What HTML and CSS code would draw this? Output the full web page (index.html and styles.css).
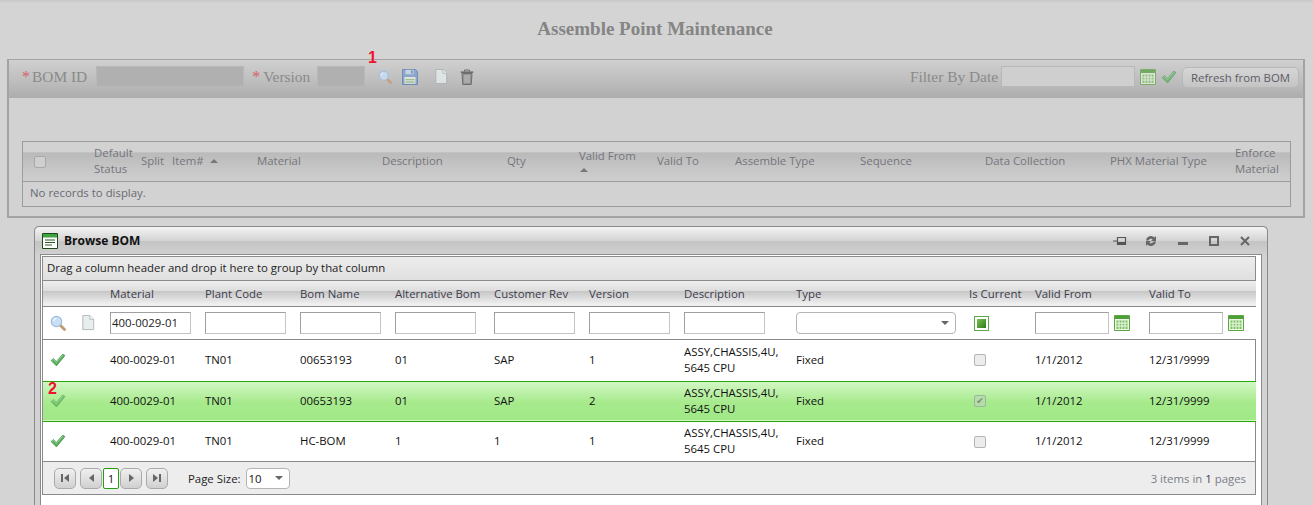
FILE: index.html
```html
<!DOCTYPE html>
<html>
<head>
	<meta charset="utf-8">
	<title>Assemble Point Maintenance</title>
	<link rel="stylesheet" href="styles.css">
</head>
<body>
	<svg class="sprites" width="0" height="0">
		<symbol id="i-search" viewBox="0 0 16 16">
			<path d="M10 10l4.500 4.500" stroke="#c39a6c" stroke-width="2.800" stroke-linecap="round"/>
			<circle cx="6.500" cy="6.500" r="5.200" fill="#c8dff6" stroke="#9dbde0" stroke-width="1.200"/>
			<path d="M3.600 6a3.200 3.200 0 0 1 2.600-2.600" fill="none" stroke="#f4f9ff" stroke-width="1.300"/>
		</symbol>
		<symbol id="i-save" viewBox="0 0 16 16">
			<path d="M.5.5h13l2 2v13H.5z" fill="#7f9fd0" stroke="#5f80b4"/>
			<path d="M3.500 .8h8v4.400h-8z" fill="#c9d6ea"/>
			<path d="M9 1.500h1.600v3H9z" fill="#6784b0"/>
			<path d="M2.500 8h11v6.800h-11z" fill="#e4eee0"/>
			<path d="M3.500 10h9v1.200h-9zM3.500 12.200h9v1.600h-9z" fill="#9cc08a"/>
		</symbol>
		<symbol id="i-doc" viewBox="0 0 14 17">
			<path d="M1.500.5h7.500l4 4v11h-11.500z" fill="#e6ecec" stroke="#a8b2b4"/>
			<path d="M9 .5v4h4" fill="#fbfdfd" stroke="#a8b2b4"/>
		</symbol>
		<symbol id="i-trash" viewBox="0 0 14 16">
			<path d="M.8 3.200h12.400" stroke="#555" stroke-width="1.600"/>
			<path d="M4.500 2.500v-1.500h5v1.500" fill="none" stroke="#555"/>
			<path d="M2 4.500h10l-.8 11h-8.400z" fill="#8a8a8a" stroke="#5c5c5c"/>
			<path d="M5 6v8M7 6v8M9 6v8" stroke="#c4c4c4"/>
		</symbol>
		<symbol id="i-cal" viewBox="0 0 16 16">
			<path d="M.5.5h15v15H.500z" fill="#eaf6e0" stroke="#5ea644"/>
			<path d="M1 1h14v3H1z" fill="#4f9e3a"/>
			<path d="M2.500 5.500h11v8.500h-11z" fill="#7dc06a"/>
			<path d="M5 5.500v8.500M8 5.500v8.500M11 5.500v8.500M2.500 8.200h11M2.500 11h11" stroke="#f2fbe8"/>
		</symbol>
		<symbol id="i-check" viewBox="0 0 16 14">
			<path d="M1 7.500l2.500-2 2.800 3L12.800 1 15 2.600 6.500 13z" fill="#58ad58" stroke="#3f8f48" stroke-width=".6"/>
			<path d="M2 7.500l1.500-1 2.800 3L13 2" fill="none" stroke="#a4dca4" stroke-width=".8"/>
		</symbol>
		<symbol id="i-win" viewBox="0 0 16 16">
			<path d="M.5.500h15v15H.500z" fill="#fff" stroke="#1c4a1c"/>
			<path d="M1 1h14v3.500H1z" fill="#3fa33f"/>
			<path d="M3 7h10M3 9.500h10M3 12h7" stroke="#2b5a2b" stroke-width="1.100"/>
		</symbol>
	</svg>

	<h1 class="page-title">Assemble Point Maintenance</h1>

	<div class="panel">
		<span class="marker marker-one">1</span>
		<div class="toolbar">
			<span class="req">*</span><label class="tool-label">BOM ID</label>
			<input class="tool-input bom-id">
			<span class="req req-gap">*</span><label class="tool-label">Version</label>
			<input class="tool-input version">
			<svg class="icon tool-icon tool-search"><use href="#i-search"/></svg>
			<svg class="icon tool-icon tool-save"><use href="#i-save"/></svg>
			<svg class="icon tool-icon tool-doc"><use href="#i-doc"/></svg>
			<svg class="icon tool-icon tool-trash"><use href="#i-trash"/></svg>
			<div class="toolbar-right">
				<label class="tool-label">Filter By Date</label>
				<input class="tool-input date-filter">
				<svg class="icon dim"><use href="#i-cal"/></svg>
				<svg class="icon dim"><use href="#i-check"/></svg>
				<button class="refresh-btn">Refresh from BOM</button>
			</div>
		</div>
		<table class="grid grid-points">
			<colgroup>
				<col class="c64"><col class="c47"><col class="c31"><col class="c85"><col class="c125"><col class="c125"><col class="c72"><col class="c78"><col class="c78"><col class="c125"><col class="c125"><col class="c125"><col class="c125"><col>
			</colgroup>
			<thead>
				<tr>
					<th class="check-col"><span class="box"></span></th>
					<th>Default Status</th>
					<th>Split</th>
					<th>Item# <span class="sort-up item-sort"></span></th>
					<th>Material</th>
					<th>Description</th>
					<th>Qty</th>
					<th class="sorted-col">Valid From<br><span class="sort-up"></span></th>
					<th>Valid To</th>
					<th>Assemble Type</th>
					<th>Sequence</th>
					<th>Data Collection</th>
					<th>PHX Material Type</th>
					<th>Enforce Material</th>
				</tr>
			</thead>
			<tbody>
				<tr><td colspan="14" class="no-records">No records to display.</td></tr>
			</tbody>
		</table>
	</div>

	<div class="window">
		<div class="window-title">
			<svg class="icon win-icon"><use href="#i-win"/></svg>
			<span class="window-name">Browse BOM</span>
			<div class="window-actions">
				<svg class="pin" width="14" height="10" viewBox="0 0 14 10"><path d="M0 5h4M4.500 1.500h8v7h-8zM4.500 1.500v7" fill="none" stroke="#555" stroke-width="1.200"/><path d="M5 6h7v2H5z" fill="#555"/></svg>
				<svg width="12" height="12" viewBox="0 0 12 12"><path d="M1 5.500a5 5 0 0 1 8.500-3l1.500-1.500v5H6l1.700-1.700A2.600 2.600 0 0 0 3.500 5.500zM11 6.500a5 5 0 0 1-8.500 3L1 11V6h5L4.300 7.700A2.600 2.600 0 0 0 8.500 6.500z" fill="#666"/></svg>
				<svg width="10" height="10" viewBox="0 0 10 10"><path d="M0 6h10v3H0z" fill="#666"/></svg>
				<svg width="10" height="10" viewBox="0 0 10 10"><path d="M1 1h8v8H1z" fill="none" stroke="#666" stroke-width="2"/></svg>
				<svg width="10" height="10" viewBox="0 0 10 10"><path d="M1 1l8 8M9 1l-8 8" stroke="#666" stroke-width="2"/></svg>
			</div>
		</div>
		<div class="window-body">
			<span class="marker marker-two">2</span>
			<div class="bom-box">
				<div class="group-hint">Drag a column header and drop it here to group by that column</div>
				<table class="grid grid-bom">
					<colgroup>
						<col class="c60"><col class="c95"><col class="c95"><col class="c95"><col class="c99"><col class="c95"><col class="c95"><col class="c112"><col class="c173"><col class="c66"><col class="c114"><col>
					</colgroup>
					<thead>
						<tr>
							<th></th><th>Material</th><th>Plant Code</th><th>Bom Name</th><th>Alternative Bom</th><th>Customer Rev</th><th>Version</th><th>Description</th><th>Type</th><th>Is Current</th><th>Valid From</th><th>Valid To</th>
						</tr>
						<tr class="filter-row">
							<td class="icon-cell">
								<svg class="icon"><use href="#i-search"/></svg>
								<svg class="icon filter-doc"><use href="#i-doc"/></svg>
							</td>
							<td><input class="filter-input" value="400-0029-01"></td>
							<td><input class="filter-input"></td>
							<td><input class="filter-input"></td>
							<td><input class="filter-input"></td>
							<td><input class="filter-input"></td>
							<td><input class="filter-input"></td>
							<td><input class="filter-input"></td>
							<td><div class="fake-select type-select"><span></span><i class="caret"></i></div></td>
							<td class="green-cell"><span class="green-box"></span></td>
							<td><div class="date-cell"><input class="filter-input date-input"><svg class="icon"><use href="#i-cal"/></svg></div></td>
							<td><div class="date-cell"><input class="filter-input date-input"><svg class="icon"><use href="#i-cal"/></svg></div></td>
						</tr>
					</thead>
					<tbody>
						<tr>
							<td class="tick-cell"><svg class="icon"><use href="#i-check"/></svg></td>
							<td>400-0029-01</td><td>TN01</td><td>00653193</td><td>01</td><td>SAP</td><td>1</td>
							<td>ASSY,CHASSIS,4U, 5645 CPU</td><td>Fixed</td>
							<td class="center-cell"><span class="box"></span></td>
							<td>1/1/2012</td><td>12/31/9999</td>
						</tr>
						<tr class="selected">
							<td class="tick-cell"><svg class="icon"><use href="#i-check"/></svg></td>
							<td>400-0029-01</td><td>TN01</td><td>00653193</td><td>01</td><td>SAP</td><td>2</td>
							<td>ASSY,CHASSIS,4U, 5645 CPU</td><td>Fixed</td>
							<td class="center-cell"><span class="box box-checked">&#10004;</span></td>
							<td>1/1/2012</td><td>12/31/9999</td>
						</tr>
						<tr>
							<td class="tick-cell"><svg class="icon"><use href="#i-check"/></svg></td>
							<td>400-0029-01</td><td>TN01</td><td>HC-BOM</td><td>1</td><td>1</td><td>1</td>
							<td>ASSY,CHASSIS,4U, 5645 CPU</td><td>Fixed</td>
							<td class="center-cell"><span class="box"></span></td>
							<td>1/1/2012</td><td>12/31/9999</td>
						</tr>
					</tbody>
				</table>
				<div class="pager">
					<button class="page-btn"><i class="bar"></i><i class="arrow-left"></i></button>
					<button class="page-btn"><i class="arrow-left"></i></button>
					<span class="page-num">1</span>
					<button class="page-btn"><i class="arrow-right"></i></button>
					<button class="page-btn"><i class="arrow-right"></i><i class="bar"></i></button>
					<span class="page-size">Page Size:</span>
					<div class="fake-select size-select"><span>10</span><i class="caret"></i></div>
					<span class="page-info">3 items in <b>1</b> pages</span>
				</div>
			</div>
		</div>
	</div>
</body>
</html>
```

FILE: styles.css
```css
* {
	margin: 0px;
	padding: 0px;
	box-sizing: border-box;
}

html, body {
	height: 505px;
	overflow: hidden;
}

body {
	background: linear-gradient(#c8c8c8, #d4d4d4 3px);
	font-family: "Open Sans", sans-serif;
	font-size: 11.4px;
	color: #111;
	padding-left: 7px;
}

.sprites {
	position: absolute;
}

.icon {
	width: 16px;
	height: 16px;
	display: block;
	flex: none;
}

.page-title {
	height: 59px;
	padding-top: 18px;
	padding-right: 10px;
	text-align: center;
	font-family: "Liberation Serif", serif;
	font-size: 19px;
	line-height: 22px;
	color: #858585;
}

.marker {
	position: absolute;
	font-family: "Liberation Sans", sans-serif;
	font-weight: bold;
	font-size: 16px;
	line-height: 16px;
	color: #f01030;
}

.marker-one {
	left: 368px;
	top: 50px;
}

.marker-two {
	left: 48px;
	top: 381px;
}

/* top panel, greyed by the window overlay */
.panel {
	width: 1298px;
	height: 159px;
	border: 2px solid #a3a3a3;
	border-top-width: 1px;
	background: #d2d2d2;
	padding-left: 13px;
}

.toolbar {
	display: flex;
	align-items: center;
	height: 38px;
	margin-left: -13px;
	margin-bottom: 43px;
	padding: 0 4px 5px 13px;
	background: linear-gradient(#d0d0d0, #bcbcbc 60%, #adadad);
}

.req {
	color: #d8606a;
	font-family: "Liberation Serif", serif;
	font-size: 16px;
	width: 10px;
}

.req-gap {
	width: 11px;
	margin-left: 8px;
}

.tool-label {
	font-family: "Liberation Serif", serif;
	font-size: 15.4px;
	color: #8a8a8a;
	margin-right: 7px;
	white-space: nowrap;
}

.tool-input {
	height: 21px;
	background: #b0b0b0;
	border: 1px solid #b8b8b8;
}

.bom-id {
	width: 148px;
	margin-left: 2px;
}

.version {
	width: 48px;
	margin-right: 13px;
}

.tool-icon {
	opacity: 0.8;
}

.tool-search {
	width: 14px;
	height: 14px;
}

.tool-save {
	margin-left: 10px;
}

.tool-doc {
	margin-left: 15px;
}

.tool-trash {
	margin-left: 10px;
}

.toolbar-right {
	display: flex;
	align-items: center;
	margin-left: auto;
}

.toolbar-right .tool-label {
	margin-right: 3px;
}

.date-filter {
	width: 134px;
	background: #cfcfcf;
	margin-right: 5px;
}

.dim {
	opacity: 0.7;
	margin-right: 5px;
}

.refresh-btn {
	width: 117px;
	height: 21px;
	margin-top: 2px;
	border: 1px solid #b8b8b8;
	border-radius: 5px;
	background: linear-gradient(#d6d6d6, #c4c4c4);
	font-family: "Open Sans", sans-serif;
	font-size: 11.4px;
	color: #5c5c66;
}

.grid {
	border-collapse: collapse;
	table-layout: fixed;
}

.grid th {
	font-weight: normal;
	text-align: left;
	line-height: 16px;
	padding: 0 7px 2px;
}

.grid-points {
	width: 1269px;
	height: 66px;
	border: 1px solid #9c9c9c;
	color: #6a6a72;
}

.grid-points thead tr {
	height: 40px;
	background: linear-gradient(#d2d2d2 25%, #bababa 28%, #cfcfcf);
	border-bottom: 1px solid #9c9c9c;
}

.grid-points th {
	color: #75757c;
	padding-left: 7.5px;
}

.grid-points .sorted-col {
	line-height: 13px;
	padding-top: 1px;
	padding-bottom: 0;
}

.no-records {
	padding: 0 7px 3px;
	height: 25px;
	background: #d2d2d2;
}

.c31 { width: 31px; }
.c47 { width: 47px; }
.c60 { width: 60px; }
.c64 { width: 64px; }
.c66 { width: 66px; }
.c72 { width: 72px; }
.c78 { width: 78px; }
.c85 { width: 85px; }
.c95 { width: 95px; }
.c99 { width: 99px; }
.c112 { width: 112px; }
.c114 { width: 114px; }
.c125 { width: 125px; }
.c173 { width: 173px; }

.grid-points .check-col {
	padding-left: 11px;
	padding-bottom: 0;
}

.box {
	display: inline-block;
	width: 12px;
	height: 12px;
	border: 1px solid #b4b4b4;
	border-radius: 2px;
	background: #ececec;
	vertical-align: middle;
}

.grid-points .box {
	background: #cfcfcf;
	border-color: #a8a8a8;
}

.box-checked {
	background: #b6dca8;
	border-color: #9ab89a;
	color: #7a8a7a;
	font-size: 9px;
	line-height: 10px;
	text-align: center;
	font-family: "DejaVu Sans", sans-serif;
}

.sort-up {
	display: inline-block;
	border-left: 4px solid transparent;
	border-right: 4px solid transparent;
	border-bottom: 4px solid #777;
	vertical-align: middle;
	margin-left: 1px;
}

.item-sort {
	margin-left: 3px;
}

/* popup window */
.window {
	width: 1234px;
	height: 290px;
	margin: 8px 0 0 27px;
	border: 1px solid #8a8a8a;
	border-bottom: 0;
	border-radius: 5px 5px 0 0;
	padding: 0 5px;
	background: #d2d2d2;
}

.window-title {
	display: flex;
	align-items: center;
	height: 27px;
	margin: 0 -5px;
	padding: 0 17px 0 7px;
	border-radius: 5px 5px 0 0;
	background: linear-gradient(#f4f4f4, #d2d2d2 52%, #c4c4c4 54%, #d0d0d0);
}

.window-name {
	margin-left: 6px;
	font-weight: bold;
	font-size: 12px;
	color: #111;
}

.window-actions {
	display: flex;
	align-items: center;
	gap: 21px;
	margin-left: auto;
}

.pin {
	margin-right: -3px;
}

.window-body {
	height: 263px;
	border: 1px solid #8a8a8a;
	border-bottom: 0;
	background: #fff;
	padding: 1px 5px 0 1px;
}

.bom-box {
	border: 1px solid #8a8a8a;
}

.group-hint {
	height: 24px;
	line-height: 22px;
	padding-left: 4px;
	background: linear-gradient(#ececec, #e0e0e0);
	color: #222;
	border-bottom: 1px solid #8a8a8a;
}

.grid-bom {
	width: 1213px;
}

.grid-bom thead tr:first-child {
	height: 25px;
	background: linear-gradient(#eeeeee, #dedede 40%, #c6c6c6 42%, #f2f2f2);
	border-bottom: 1px solid #8a8a8a;
}

.grid-bom th {
	color: #3c3c4c;
	white-space: nowrap;
	padding: 1px 7px 0;
}

.filter-row {
	height: 33px;
	background: #fff;
	border-bottom: 1px solid #8a8a8a;
}

.filter-row td {
	padding: 0 0 0 7px;
}

.filter-input {
	width: 81px;
	height: 22px;
	padding-left: 1px;
	border: 1px solid #a0a0a0;
	border-right-color: #c4c4c4;
	border-bottom-color: #c4c4c4;
	font-family: "Open Sans", sans-serif;
	font-size: 11.4px;
	color: #222;
	display: block;
}

.icon-cell {
	display: flex;
	align-items: center;
	height: 32px;
	gap: 14px;
}

.filter-doc {
	opacity: 0.9;
}

.fake-select {
	display: flex;
	align-items: center;
	justify-content: space-between;
	border: 1px solid #b4b4b4;
	border-radius: 4px;
	background: #fff;
	padding: 0 6px 0 2px;
}

.type-select {
	width: 160px;
	height: 22px;
}

.caret {
	border-left: 4px solid transparent;
	border-right: 4px solid transparent;
	border-top: 4px solid #666;
}

.green-box {
	display: inline-block;
	width: 13px;
	height: 13px;
	border: 2px solid #fff;
	outline: 1px solid #5fa84a;
	background: linear-gradient(135deg, #7cc24e, #2e7d1c);
	vertical-align: middle;
}

.filter-row .green-cell {
	padding-left: 13px;
}

.grid-bom tbody .center-cell {
	padding-left: 12px;
}

.date-cell {
	display: flex;
	align-items: center;
	gap: 5px;
}

.date-input {
	width: 74px;
}

.grid-bom tbody tr {
	height: 40px;
}

.grid-bom tbody td {
	padding: 0 7px 1px;
	line-height: 16px;
	color: #111;
}

.grid-bom tbody tr:first-child {
	height: 42px;
}

.selected {
	background: linear-gradient(#d2f7c4, #a6ea8c 55%, #a0e888);
	border-top: 1px solid #2aa80a;
	border-bottom: 1px solid #2aa80a;
}

.selected .tick-cell .icon {
	opacity: 0.7;
}

.pager {
	display: flex;
	align-items: center;
	height: 33px;
	padding-left: 11px;
	padding-right: 9px;
	background: #ededed;
	border-top: 1px solid #8a8a8a;
}

.page-btn {
	display: flex;
	align-items: center;
	justify-content: center;
	gap: 1px;
	width: 22px;
	height: 21px;
	margin-right: 4px;
	border: 1px solid #aaa;
	border-radius: 5px;
	background: linear-gradient(#f0f0f0, #d0d0d0);
}

.page-btn + .page-num {
	margin-left: -3px;
}

.page-num {
	width: 16px;
	height: 21px;
	margin-right: 1px;
	border: 1px solid #2a9a10;
	border-radius: 2px;
	background: #fff;
	text-align: center;
	line-height: 19px;
}

.bar {
	width: 2px;
	height: 8px;
	background: #666;
}

.arrow-left {
	border-top: 4px solid transparent;
	border-bottom: 4px solid transparent;
	border-right: 5px solid #666;
}

.arrow-right {
	border-top: 4px solid transparent;
	border-bottom: 4px solid transparent;
	border-left: 5px solid #666;
}

.page-size {
	margin-left: 16px;
	margin-right: 5px;
	color: #222;
}

.size-select {
	width: 44px;
	height: 21px;
}

.page-info {
	margin-left: auto;
	color: #7c7c88;
}

.page-info b {
	font-weight: normal;
	color: #4a3a5a;
}
```
